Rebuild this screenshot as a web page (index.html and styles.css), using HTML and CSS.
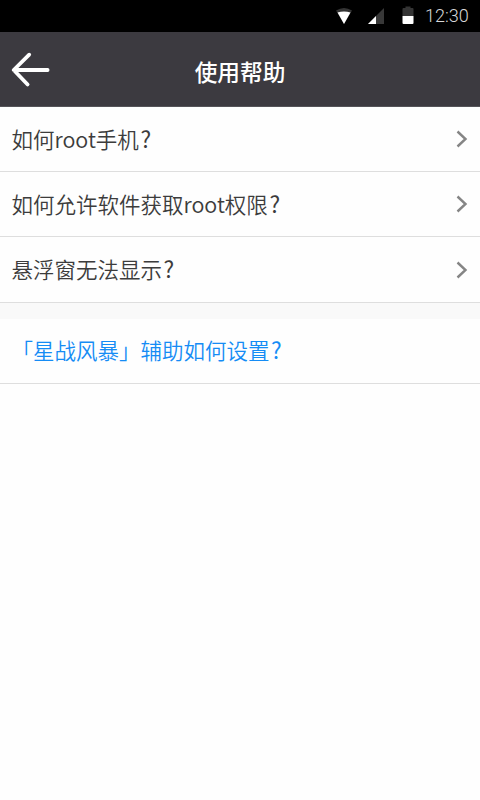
FILE: index.html
```html
<!DOCTYPE html>
<html lang="zh-CN">
<head>
<meta charset="utf-8">
<title>使用帮助</title>
<link rel="stylesheet" href="styles.css">
</head>
<body>
<div class="status">
  <svg class="status-icons" width="100" height="32" viewBox="0 0 100 32">
    <path d="M16 10.500Q24 5.500 32 10.500L24 24Z" fill="#343434"/>
    <path d="M17.500 12.500Q24 10.500 30.500 12.500L24 24Z" fill="#fff"/>
    <path d="M48 24L64 8V24Z" fill="#383838"/>
    <path d="M48 24L56 16V24Z" fill="#fff"/>
    <path d="M82.500 9Q82.500 8 83.500 8H85.500V6.500H90.500V8H92.500Q93.500 8 93.500 9V16H82.500Z" fill="#343434"/>
    <path d="M82.500 16H93.500V23Q93.500 24 92.500 24H83.500Q82.500 24 82.500 23Z" fill="#fff"/>
  </svg>
  <span class="clock">12:30</span>
</div>
<header class="header">
  <svg class="back" width="60" height="74" viewBox="0 0 60 74">
    <path d="M29.200 22.700L13.700 38L27.600 52.500M14 38H47.600"/>
  </svg>
  <h1 class="title">使用帮助</h1>
</header>
<main>
  <div class="row"><span>如何root手机<span class="mark">?</span></span><svg class="chevron" width="12" height="18" viewBox="0 0 12 18"><path d="M1.500 1.500L9.500 9L1.500 16.500"/></svg></div>
  <div class="row"><span>如何允许软件获取root权限<span class="mark">?</span></span><svg class="chevron" width="12" height="18" viewBox="0 0 12 18"><path d="M1.500 1.500L9.500 9L1.500 16.500"/></svg></div>
  <div class="row row-last"><span>悬浮窗无法显示<span class="mark">?</span></span><svg class="chevron" width="12" height="18" viewBox="0 0 12 18"><path d="M1.500 1.500L9.500 9L1.500 16.500"/></svg></div>
  <div class="gap"></div>
  <div class="row link"><span>「星战风暴」辅助如何设置<span class="mark">?</span></span></div>
</main>
</body>
</html>
```

FILE: styles.css
```css
* { box-sizing: border-box; }
body {
  margin: 0;
  background: #fefefe;
  color: #3c3c3c;
  font-family: "Noto Sans CJK SC", sans-serif;
}
.status {
  height: 32px;
  background: #000;
  display: flex;
  align-items: center;
  padding-left: 320px;
}
.status-icons { flex: none; }
.clock {
  margin-left: 5px;
  font: 300 18px/32px Roboto, sans-serif;
  color: #d8d8d8;
}
.header {
  height: 75px;
  background: #3c3a40;
  border-bottom: 1px solid #555459;
  display: grid;
  grid-template-columns: 60px 1fr 60px;
  align-items: center;
}
.back {
  fill: none;
  stroke: #fff;
  stroke-width: 3.8;
  stroke-linecap: round;
  stroke-linejoin: round;
}
.title {
  margin: 0;
  padding-top: 5px;
  color: #fff;
  text-align: center;
  font-size: 22.7px;
  line-height: 34px;
  font-weight: 500;
}
.row {
  height: 65px;
  padding: 0 12px 2px 11.5px;
  display: flex;
  align-items: center;
  justify-content: space-between;
  border-bottom: 1px solid #dedede;
  font-size: 21.5px;
  font-weight: 350;
  line-height: 32px;
}
.row-last { height: 66px; }
.mark {
  margin-left: 1.5px;
  font-size: 22.5px;
  font-weight: 400;
}
.chevron {
  margin-top: 2px;
  fill: none;
  stroke: #858585;
  stroke-width: 2.4;
}
.gap { height: 16px; background: #f9f9f9; }
.link { color: #158cf5; padding-bottom: 3px; }
```
